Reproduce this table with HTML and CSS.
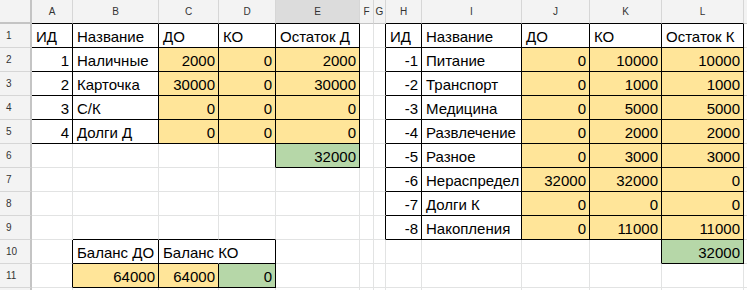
FILE: index.html
```html
<!DOCTYPE html>
<html lang="ru">
<head>
    <meta charset="UTF-8">
    <title>Бюджет</title>
    <link rel="stylesheet" href="styles.css">
</head>
<body>
    <div class="sheet">
        <!-- column letters -->
        <div class="row head">
            <div class="corner"></div>
            <div class="col kb">A</div>
            <div class="col kb">B</div>
            <div class="col kb">C</div>
            <div class="col kb">D</div>
            <div class="col kb sel">E</div>
            <div class="col">F</div>
            <div class="col">G</div>
            <div class="col kb">H</div>
            <div class="col kb">I</div>
            <div class="col kb">J</div>
            <div class="col kb">K</div>
            <div class="col kb">L</div>
            <div class="col"></div>
        </div>

        <div class="row">
            <div class="num">1</div>
            <div class="c k">ИД</div>
            <div class="c k">Название</div>
            <div class="c k">ДО</div>
            <div class="c k">КО</div>
            <div class="c k">Остаток Д</div>
            <div class="c"></div>
            <div class="c kr"></div>
            <div class="c k">ИД</div>
            <div class="c k">Название</div>
            <div class="c k">ДО</div>
            <div class="c k">КО</div>
            <div class="c k">Остаток К</div>
            <div class="c"></div>
        </div>

        <div class="row">
            <div class="num">2</div>
            <div class="c k n">1</div>
            <div class="c k">Наличные</div>
            <div class="c k n y">2000</div>
            <div class="c k n y">0</div>
            <div class="c k n y">2000</div>
            <div class="c"></div>
            <div class="c kr"></div>
            <div class="c k n">-1</div>
            <div class="c k">Питание</div>
            <div class="c k n y">0</div>
            <div class="c k n y">10000</div>
            <div class="c k n y">10000</div>
            <div class="c"></div>
        </div>

        <div class="row">
            <div class="num">3</div>
            <div class="c k n">2</div>
            <div class="c k">Карточка</div>
            <div class="c k n y">30000</div>
            <div class="c k n y">0</div>
            <div class="c k n y">30000</div>
            <div class="c"></div>
            <div class="c kr"></div>
            <div class="c k n">-2</div>
            <div class="c k">Транспорт</div>
            <div class="c k n y">0</div>
            <div class="c k n y">1000</div>
            <div class="c k n y">1000</div>
            <div class="c"></div>
        </div>

        <div class="row">
            <div class="num">4</div>
            <div class="c k n">3</div>
            <div class="c k">С/К</div>
            <div class="c k n y">0</div>
            <div class="c k n y">0</div>
            <div class="c k n y">0</div>
            <div class="c"></div>
            <div class="c kr"></div>
            <div class="c k n">-3</div>
            <div class="c k">Медицина</div>
            <div class="c k n y">0</div>
            <div class="c k n y">5000</div>
            <div class="c k n y">5000</div>
            <div class="c"></div>
        </div>

        <div class="row">
            <div class="num">5</div>
            <div class="c k n">4</div>
            <div class="c k">Долги Д</div>
            <div class="c k n y">0</div>
            <div class="c k n y">0</div>
            <div class="c k n y">0</div>
            <div class="c"></div>
            <div class="c kr"></div>
            <div class="c k n">-4</div>
            <div class="c k">Развлечение</div>
            <div class="c k n y">0</div>
            <div class="c k n y">2000</div>
            <div class="c k n y">2000</div>
            <div class="c"></div>
        </div>

        <div class="row">
            <div class="num">6</div>
            <div class="c"></div>
            <div class="c"></div>
            <div class="c"></div>
            <div class="c kr"></div>
            <div class="c k n g">32000</div>
            <div class="c"></div>
            <div class="c kr"></div>
            <div class="c k n">-5</div>
            <div class="c k">Разное</div>
            <div class="c k n y">0</div>
            <div class="c k n y">3000</div>
            <div class="c k n y">3000</div>
            <div class="c"></div>
        </div>

        <div class="row">
            <div class="num">7</div>
            <div class="c"></div>
            <div class="c"></div>
            <div class="c"></div>
            <div class="c"></div>
            <div class="c"></div>
            <div class="c"></div>
            <div class="c kr"></div>
            <div class="c k n">-6</div>
            <div class="c k">Нераспредел</div>
            <div class="c k n y">32000</div>
            <div class="c k n y">32000</div>
            <div class="c k n y">0</div>
            <div class="c"></div>
        </div>

        <div class="row">
            <div class="num">8</div>
            <div class="c"></div>
            <div class="c"></div>
            <div class="c"></div>
            <div class="c"></div>
            <div class="c"></div>
            <div class="c"></div>
            <div class="c kr"></div>
            <div class="c k n">-7</div>
            <div class="c k">Долги К</div>
            <div class="c k n y">0</div>
            <div class="c k n y">0</div>
            <div class="c k n y">0</div>
            <div class="c"></div>
        </div>

        <div class="row">
            <div class="num">9</div>
            <div class="c"></div>
            <div class="c kb"></div>
            <div class="c kb"></div>
            <div class="c kb"></div>
            <div class="c"></div>
            <div class="c"></div>
            <div class="c kr"></div>
            <div class="c k n">-8</div>
            <div class="c k">Накопления</div>
            <div class="c k n y">0</div>
            <div class="c k n y">11000</div>
            <div class="c k n y">11000</div>
            <div class="c"></div>
        </div>

        <div class="row">
            <div class="num">10</div>
            <div class="c kr"></div>
            <div class="c k">Баланс ДО</div>
            <div class="c kb spill">Баланс КО</div>
            <div class="c k"></div>
            <div class="c"></div>
            <div class="c"></div>
            <div class="c"></div>
            <div class="c"></div>
            <div class="c"></div>
            <div class="c"></div>
            <div class="c kr"></div>
            <div class="c k n g">32000</div>
            <div class="c"></div>
        </div>

        <div class="row">
            <div class="num">11</div>
            <div class="c kr"></div>
            <div class="c k n y">64000</div>
            <div class="c k n y">64000</div>
            <div class="c k n g">0</div>
            <div class="c"></div>
            <div class="c"></div>
            <div class="c"></div>
            <div class="c"></div>
            <div class="c"></div>
            <div class="c"></div>
            <div class="c"></div>
            <div class="c"></div>
            <div class="c"></div>
        </div>

        <!-- next row peeks in under the fold -->
        <div class="row">
            <div class="num"></div>
            <div class="c"></div>
            <div class="c"></div>
            <div class="c"></div>
            <div class="c"></div>
            <div class="c"></div>
            <div class="c"></div>
            <div class="c"></div>
            <div class="c"></div>
            <div class="c"></div>
            <div class="c"></div>
            <div class="c"></div>
            <div class="c"></div>
            <div class="c"></div>
        </div>
    </div>
</body>
</html>
```

FILE: styles.css
```css
/* Sheet grid */
body {
    margin: 0;
    background-color: #fff;
    font-family: "Liberation Sans", Arial, sans-serif;
    overflow: hidden;
}

.sheet {
    width: 747px;
    height: 290px;
    overflow: hidden;
}

.row {
    display: grid;
    grid-template-columns: 32px 41px 86px 60px 57px 84px 14px 12px 36px 100px 68px 72px 82px 60px;
    height: 24px;
}

.row > div {
    box-sizing: border-box;
    height: 24px;
    border-right: 1px solid #e2e3e3;
    border-bottom: 1px solid #e2e3e3;
}

/* Headers */
.corner {
    background-color: #f3f3f3;
}

.row > .corner {
    border-right: 2px solid #c4c4c4;
    border-bottom: 2px solid #c4c4c4;
}

.head .col {
    background-color: #f3f3f3;
    color: #333;
    font-size: 10px;
    line-height: 23px;
    text-align: center;
    border-right-color: #d6d6d6;
    border-bottom-color: #c4c4c4;
}

.head .col.sel {
    background-color: #dcdcdc;
}

.row > .num {
    background-color: #f3f3f3;
    color: #333;
    font-size: 10px;
    line-height: 23px;
    padding-left: 6px;
    border-right: 2px solid #c4c4c4;
    border-bottom-color: #d6d6d6;
}

/* Cells */
.c {
    font-size: 15px;
    line-height: 25px;
    padding: 0 3px 0 4px;
    color: #000;
    white-space: nowrap;
    overflow: hidden;
}

.n {
    text-align: right;
}

.y {
    background-color: #ffe599;
}

.g {
    background-color: #b6d7a8;
}

/* Black borders of the filled ranges */
.row > .k {
    border-right-color: #000;
    border-bottom-color: #000;
}

.row > .kr {
    border-right-color: #000;
}

.row > .kb {
    border-bottom-color: #000;
}

.row > .spill {
    overflow: visible;
    border-right-color: transparent;
    position: relative;
    z-index: 1;
}
```
